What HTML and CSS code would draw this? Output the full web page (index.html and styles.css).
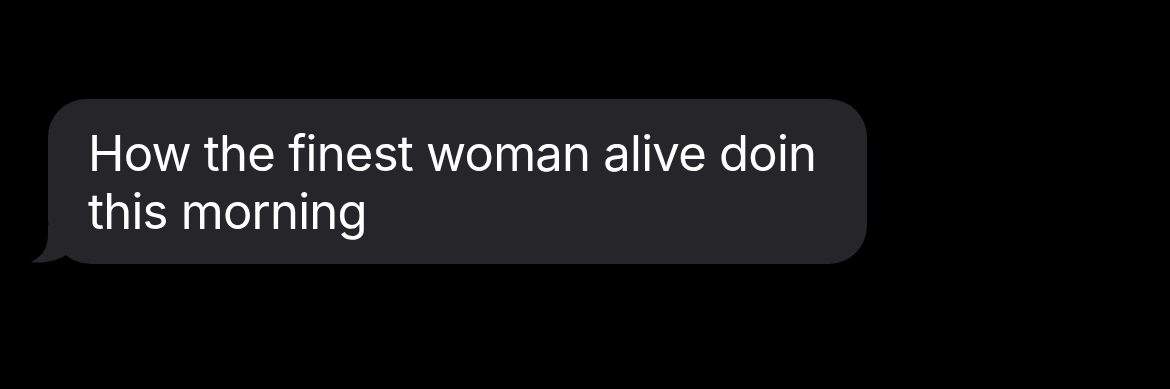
FILE: index.html
```html
<!DOCTYPE html>
<html>
<head>
<meta charset="utf-8">
<link rel="stylesheet" href="styles.css">
</head>
<body>
<div class="thread">
  <div class="bubble">
    <svg class="tail" width="40" height="40" viewBox="0 0 40 40">
      <path d="M17 0 L17 10 C17 24 10 32 0 37 C 12 39 26 36 37 29 L40 0 Z" fill="#26252a"/>
    </svg>
    <p class="text">How the finest woman alive doin<br>this morning</p>
  </div>
</div>
</body>
</html>
```
FILE: styles.css
```css
html, body {
  margin: 0;
  background: #000;
}
.thread {
  padding: 99px 0 0 48px;
}
.bubble {
  position: relative;
  width: 819px;
  height: 165px;
  box-sizing: border-box;
  background: #26252a;
  border-radius: 38px 38px 38px 44px;
  padding: 26px 0 0 40px;
}
.tail {
  position: absolute;
  left: -17px;
  top: 126px;
}
.text {
  position: relative;
  margin: 0;
  color: #fff;
  font-family: Inter, "Noto Sans", sans-serif;
  font-size: 49px;
  line-height: 58px;
  letter-spacing: -0.75px;
}
```
